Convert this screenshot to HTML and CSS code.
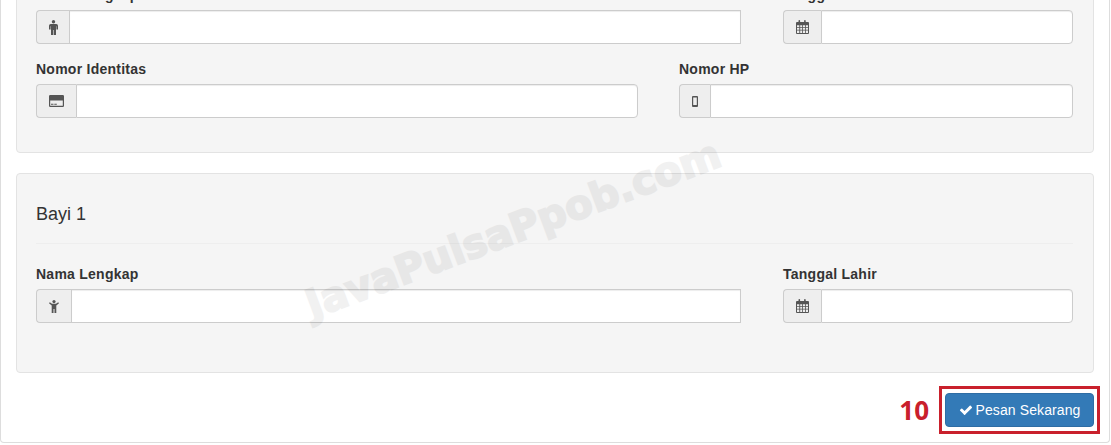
FILE: index.html
```html
<!DOCTYPE html>
<html lang="en">
<head>
  <meta charset="UTF-8">
  <meta name="viewport" content="width=device-width, initial-scale=1.0">
  <title>Pesan Tiket</title>
  <link rel="stylesheet" href="styles.css">
</head>
<body>
  <div class="page">
    <div class="outer-panel">

      <div class="passenger passenger-first">
        <div class="form-row form-row-name">
          <div class="field">
            <label>Nama Lengkap</label>
            <div class="input-group">
              <span class="addon addon-male">
                <svg width="9" height="15" viewBox="0 0 9 15"><circle cx="4.5" cy="1.7" r="1.7"/><path d="M1.8 4h5.4Q9 4 9 5.8V9.6H7.4V6.2H7v8.8H4.8V10h-.6v5H2V6.2h-.4v3.4H0V5.8Q0 4 1.8 4z"/></svg>
              </span>
              <input type="text">
            </div>
          </div>
          <div class="field">
            <label>Tanggal Lahir</label>
            <div class="input-group">
              <span class="addon addon-date">
                <svg width="13" height="14" viewBox="0 0 13 14"><use href="#calendar"/></svg>
              </span>
              <input type="text">
            </div>
          </div>
        </div>
        <div class="form-row form-row-contact">
          <div class="field">
            <label>Nomor Identitas</label>
            <div class="input-group">
              <span class="addon addon-card">
                <svg width="15" height="12" viewBox="0 0 15 12"><path fill-rule="evenodd" d="M1.2 0h12.6Q15 0 15 1.2v9.6q0 1.200-1.200 1.200H1.200Q0 12 0 10.800V1.200Q0 0 1.200 0zM1.200 5.400v5.400h12.600V5.400zM2 8.800h2.500v1H2zM5.300 8.800h2.500v1H5.300z"/></svg>
              </span>
              <input type="text">
            </div>
          </div>
          <div class="field">
            <label>Nomor HP</label>
            <div class="input-group">
              <span class="addon addon-phone">
                <svg width="6" height="11" viewBox="0 0 6 11"><path fill-rule="evenodd" d="M1 0h4q1 0 1 1v9q0 1-1 1H1q-1 0-1-1V1q0-1 1-1zM1.200 1.500v7.500h3.600V1.500z"/></svg>
              </span>
              <input type="text">
            </div>
          </div>
        </div>
      </div>

      <div class="passenger passenger-baby">
        <h4 class="passenger-title">Bayi 1</h4>
        <div class="form-row form-row-name">
          <div class="field">
            <label>Nama Lengkap</label>
            <div class="input-group">
              <span class="addon addon-child">
                <svg width="10" height="13" viewBox="0 0 10 13"><circle cx="5" cy="1.600" r="1.600"/><path d="M.8 2.200 3 3.800h4l2.200-1.600.8 1L7.300 5.400V13H5.500V9h-1v4H2.700V5.400L0 3.200z"/></svg>
              </span>
              <input type="text">
            </div>
          </div>
          <div class="field">
            <label>Tanggal Lahir</label>
            <div class="input-group">
              <span class="addon addon-date">
                <svg width="13" height="14" viewBox="0 0 13 14"><use href="#calendar"/></svg>
              </span>
              <input type="text">
            </div>
          </div>
        </div>
      </div>

      <div class="order-row">
        <span class="step-number">10</span>
        <div class="step-box">
          <button class="btn-order">
            <svg width="14" height="14" viewBox="0 0 1792 1792"><path d="M1671 566q0 40-28 68l-724 724-136 136q-28 28-68 28t-68-28l-136-136-362-362q-28-28-28-68t28-68l136-136q28-28 68-28t68 28l294 295 656-657q28-28 68-28t68 28l136 136q28 28 28 68z"/></svg>
            Pesan Sekarang
          </button>
        </div>
      </div>

    </div>
    <div class="watermark">JavaPulsaPpob.com</div>
  </div>

  <svg class="icon-defs" width="0" height="0">
    <symbol id="calendar" viewBox="0 0 13 14">
      <path fill-rule="evenodd" d="M1 2h1.500V.800q0-.800.800-.800t.800.800V2h4V.800q0-.800.800-.800t.800.800V2H12q1 0 1 1v10q0 1-1 1H1q-1 0-1-1V3q0-1 1-1zM1 5.200v1.800h2.300V5.200zM4.200 5.200v1.800h2V5.200zM7 5.200v1.800h2V5.200zM9.800 5.200v1.800H12V5.200zM1 7.800v2h2.300v-2zM4.200 7.800v2h2v-2zM7 7.800v2h2v-2zM9.800 7.800v2H12v-2zM1 10.600V13h2.300v-2.400zM4.200 10.600V13h2v-2.400zM7 10.600V13h2v-2.400zM9.800 10.600V13H12v-2.400z"/>
    </symbol>
  </svg>
</body>
</html>
```

FILE: styles.css
```css
html, body {
  margin: 0;
  padding: 0;
  height: 445px;
  overflow: hidden;
  background-color: #fff;
}

body {
  font-family: "Liberation Sans", Arial, sans-serif;
  font-size: 14px;
  color: #333;
}

.page {
  position: relative;
  height: 445px;
  overflow: hidden;
}

.outer-panel {
  box-sizing: border-box;
  width: 1110px;
  height: 479px;
  margin-top: -36px;
  padding: 0 15px 0 15px;
  border: 1px solid #ddd;
  border-top: 0;
  border-radius: 0 0 4px 4px;
}

.passenger {
  padding: 20px 20px 0 19px;
  background-color: #f5f5f5;
  border: 1px solid #e3e3e3;
  border-radius: 4px;
}

.passenger-first {
  height: 189px;
  box-sizing: border-box;
  margin-bottom: 20px;
}

.passenger-baby {
  height: 200px;
  box-sizing: border-box;
}

.passenger-title {
  margin: 0 0 20px;
  padding: 10px 0 18px;
  font-size: 18px;
  font-weight: 400;
  line-height: 21px;
  border-bottom: 1px solid #eee;
}

.form-row {
  display: flex;
  justify-content: space-between;
  margin-bottom: 15px;
}

.form-row-name .field:first-child { width: 705px; }
.form-row-name .field:last-child { width: 290px; }
.form-row-contact .field:first-child { width: 602px; }
.form-row-contact .field:last-child { width: 394px; }

label {
  display: block;
  margin-bottom: 5px;
  font-weight: bold;
  line-height: 20px;
  letter-spacing: .25px;
}

.input-group {
  display: flex;
  height: 34px;
}

.addon {
  box-sizing: border-box;
  display: flex;
  flex: none;
  align-items: center;
  justify-content: center;
  background-color: #eee;
  border: 1px solid #ccc;
  border-right: 0;
  border-radius: 4px 0 0 4px;
}

.addon svg { fill: #555; }

.addon-male { width: 33px; }
.addon-child { width: 35px; }
.addon-date { width: 38px; }
.addon-card { width: 40px; }
.addon-phone { width: 31px; }

.input-group input {
  box-sizing: border-box;
  flex: 1;
  min-width: 0;
  height: 34px;
  padding: 6px 12px;
  background-color: #fff;
  border: 1px solid #ccc;
  border-radius: 0 4px 4px 0;
  box-shadow: inset 0 1px 1px rgba(0, 0, 0, .075);
  outline: none;
}

.form-row-name .field:first-child input { border-radius: 0; }

.order-row {
  display: flex;
  align-items: center;
  justify-content: flex-end;
  gap: 10px;
  margin: 13px -6px 0 0;
}

.step-number {
  font-family: "Open Sans", sans-serif;
  font-size: 26px;
  font-weight: 700;
  color: #c9202c;
}

.step-box {
  padding: 4px 3px;
  border: 3px solid #c9202c;
}

.btn-order {
  display: flex;
  align-items: center;
  justify-content: center;
  gap: 3px;
  width: 149px;
  height: 34px;
  padding: 0;
  font-family: "Liberation Sans", Arial, sans-serif;
  font-size: 14px;
  letter-spacing: .1px;
  color: #fff;
  background-color: #337ab7;
  border: 1px solid #2e6da4;
  border-radius: 4px;
}

.btn-order svg { fill: #fff; }

.watermark {
  position: absolute;
  left: 513px;
  top: 229px;
  font-family: "DejaVu Sans", sans-serif;
  font-size: 40px;
  font-weight: bold;
  white-space: nowrap;
  color: #000;
  -webkit-text-stroke: 2px #000;
  opacity: .05;
  transform: translate(-50%, -50%) rotate(-20.5deg);
  pointer-events: none;
}

.icon-defs { position: absolute; }
```
